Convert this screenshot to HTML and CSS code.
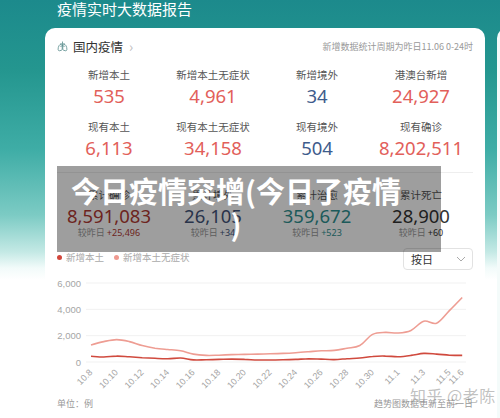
FILE: index.html
```html
<!DOCTYPE html>
<html lang="zh-CN">
<head>
  <meta charset="UTF-8">
  <meta name="viewport" content="width=device-width, initial-scale=1.0">
  <title>今日疫情突增</title>
  <link rel="stylesheet" href="styles.css">
</head>
<body>
  <div class="page">
    <h1 class="page-title">疫情实时大数据报告</h1>

    <div class="cards">
      <section class="card">
        <div class="card-head">
          <div class="card-title">
            <svg class="lung" width="11" height="11" viewBox="0 0 12 12">
              <path d="M6 1v4M6 5c-.6.5-1.4.8-2 .8M6 5c.6.5 1.4.8 2 .8" />
              <path d="M4.3 3.2C2.6 3.6 1.2 6.2 1.2 9c0 1.3.8 1.9 1.9 1.6l1.9-.6c.5-.2.7-.6.7-1.1V5.4c0-1.3-.5-2.4-1.4-2.2z" />
              <path d="M7.7 3.2c1.7.4 3.1 3 3.1 5.8 0 1.3-.8 1.9-1.9 1.6l-1.9-.6c-.5-.2-.7-.6-.7-1.1V5.4c0-1.3.5-2.4 1.4-2.2z" />
            </svg>
            <span>国内疫情</span>
            <span class="arrow">&#8250;</span>
          </div>
          <div class="card-note">新增数据统计周期为昨日11.06 0-24时</div>
        </div>

        <div class="stats">
          <div class="stat"><div class="stat-label">新增本土</div><div class="stat-num red">535</div></div>
          <div class="stat"><div class="stat-label">新增本土无症状</div><div class="stat-num red">4,961</div></div>
          <div class="stat"><div class="stat-label">新增境外</div><div class="stat-num blue">34</div></div>
          <div class="stat"><div class="stat-label">港澳台新增</div><div class="stat-num red">24,927</div></div>
          <div class="stat"><div class="stat-label">现有本土</div><div class="stat-num red">6,113</div></div>
          <div class="stat"><div class="stat-label">现有本土无症状</div><div class="stat-num red">34,158</div></div>
          <div class="stat"><div class="stat-label">现有境外</div><div class="stat-num blue">504</div></div>
          <div class="stat"><div class="stat-label">现有确诊</div><div class="stat-num red">8,202,511</div></div>
        </div>

        <div class="stats totals">
          <div class="stat">
            <div class="stat-label">累计确诊</div>
            <div class="stat-num dark-red">8,591,083</div>
            <div class="stat-diff">较昨日 <b class="dark-red">+25,496</b></div>
          </div>
          <div class="stat">
            <div class="stat-label">累计境外</div>
            <div class="stat-num navy">26,105</div>
            <div class="stat-diff">较昨日 <b class="navy">+34</b></div>
          </div>
          <div class="stat">
            <div class="stat-label">累计治愈</div>
            <div class="stat-num teal">359,672</div>
            <div class="stat-diff">较昨日 <b class="teal">+523</b></div>
          </div>
          <div class="stat">
            <div class="stat-label">累计死亡</div>
            <div class="stat-num ink">28,900</div>
            <div class="stat-diff">较昨日 <b class="ink">+60</b></div>
          </div>
        </div>

        <div class="chart-bar">
          <div class="legend">
            <span class="legend-item"><i class="dot dot-local"></i>新增本土</span>
            <span class="legend-item"><i class="dot dot-asym"></i>新增本土无症状</span>
          </div>
          <div class="select">
            <span>按日</span>
            <svg width="10" height="6" viewBox="0 0 10 6"><path d="M1 1l4 4 4-4" /></svg>
          </div>
        </div>

        <svg class="chart" id="trend" width="416" height="122"></svg>

        <div class="chart-foot">
          <span>单位：例</span>
          <span>趋势图数据更新至前一日</span>
        </div>
      </section>

      <section class="card card-next"></section>
    </div>

    <div class="banner">今日疫情突增(今日了疫情)</div>
    <div class="watermark">知乎 @老陈</div>
  </div>

  <script>
    const dates = [];
    for (let d = 8; d <= 31; d++) dates.push('10.' + d);
    for (let d = 1; d <= 6; d++) dates.push('11.' + d);

    const local = [430, 380, 450, 400, 330, 280, 250, 300, 160, 170, 200, 220, 200, 150, 150,
                   170, 200, 250, 220, 180, 250, 300, 420, 450, 400, 500, 650, 600, 520, 500];
    const asym = [1300, 1550, 1700, 1550, 1250, 1050, 950, 850, 600, 500, 520, 560, 580, 600, 620,
                  650, 700, 780, 850, 880, 1050, 1250, 2100, 2250, 2200, 2400, 3100, 2950, 3900, 4900];

    const chart = document.getElementById('trend');
    const x0 = 34, step = 12.8, yBase = 90, yMax = 11;

    const xAt = i => x0 + i * step;
    const yAt = v => yBase - v * (yBase - yMax) / 6000;

    // catmull-rom through the points, written as cubic beziers
    function smoothPath(values) {
      const pts = values.map((v, i) => [xAt(i), yAt(v)]);
      let d = 'M' + pts[0][0] + ' ' + pts[0][1].toFixed(1);
      for (let i = 0; i < pts.length - 1; i++) {
        const p0 = pts[i - 1] || pts[i];
        const p1 = pts[i];
        const p2 = pts[i + 1];
        const p3 = pts[i + 2] || p2;
        const c1 = [p1[0] + (p2[0] - p0[0]) / 6, p1[1] + (p2[1] - p0[1]) / 6];
        const c2 = [p2[0] - (p3[0] - p1[0]) / 6, p2[1] - (p3[1] - p1[1]) / 6];
        d += ' C' + c1.map(n => n.toFixed(1)).join(' ') + ' ' +
             c2.map(n => n.toFixed(1)).join(' ') + ' ' +
             p2[0].toFixed(1) + ' ' + p2[1].toFixed(1);
      }
      return d;
    }

    let html = '';
    [0, 2000, 4000, 6000].forEach(v => {
      const y = yAt(v);
      html += `<line class="grid" x1="29" x2="409" y1="${y}" y2="${y}"/>`;
      html += `<text class="y-label" x="24" y="${y + 3.5}">${v.toLocaleString('en-US')}</text>`;
    });

    dates.forEach((label, i) => {
      if (i % 2 !== 0 && i !== dates.length - 1) return;
      const x = xAt(i) + 2;
      html += `<text class="x-label" x="${x}" y="101" transform="rotate(-45 ${x} 101)">${label}</text>`;
    });

    html += `<path class="line line-asym" d="${smoothPath(asym)}"/>`;
    html += `<path class="line line-local" d="${smoothPath(local)}"/>`;
    chart.innerHTML = html;
  </script>
</body>
</html>
```

FILE: styles.css
```css
body {
  margin: 0;
  font-family: "Noto Sans CJK SC", "Noto Sans", sans-serif;
  color: #333;
  background: #fff;
  overflow: hidden;
}

.page {
  position: relative;
  height: 418px;
  overflow: hidden;
  background: linear-gradient(180deg, #1c8a8c 0, #24968f 70px, #3fada6 150px, #7ccbc4 215px, #c4e9e5 252px, #f2fbfa 268px, #fff 280px);
}

.page-title {
  margin: 0;
  padding-left: 57px;
  font-size: 15px;
  font-weight: 400;
  line-height: 17px;
  color: #fff;
}

.cards {
  display: flex;
  gap: 12px;
  margin-top: 11px;
  padding-left: 45px;
}

.card {
  flex: 0 0 440px;
  box-sizing: border-box;
  height: 400px;
  padding: 10px 12px 0;
  background: #fff;
  border-radius: 10px;
}

.card-next {
  flex: 0 0 100px;
  background: #f4fbfa;
}

.card-head {
  display: flex;
  justify-content: space-between;
  align-items: center;
  height: 16px;
}

.card-title {
  display: flex;
  align-items: center;
  gap: 5px;
  font-size: 12.5px;
  color: #333;
}

.lung {
  fill: none;
  stroke: #5c8f8f;
  stroke-width: 0.9;
  stroke-linecap: round;
}

.arrow {
  color: #bbb;
  font-size: 14px;
  margin-left: 1px;
}

.card-note {
  font-size: 9px;
  color: #999;
}

.stats {
  display: grid;
  grid-template-columns: repeat(4, 1fr);
  row-gap: 12px;
  margin-top: 14px;
  padding-bottom: 12px;
  border-bottom: 1px solid #eee;
  text-align: center;
}

.stat-label {
  font-size: 10.5px;
  line-height: 14px;
  color: #555;
}

.stat-num {
  margin-top: 2px;
  font-family: "Noto Sans", sans-serif;
  font-size: 18.5px;
  line-height: 24px;
}

.totals {
  margin-top: 15px;
  padding-bottom: 0;
  border-bottom: none;
}

.totals .stat-num {
  margin-top: 3px;
  line-height: 22px;
}

.stat-diff {
  font-size: 9px;
  line-height: 12px;
  color: #999;
}

.stat-diff b {
  font-family: "Noto Sans", sans-serif;
  font-weight: 400;
}

.red { color: #e2605a; }
.blue { color: #3e5c8c; }
.dark-red { color: #b03a33; }
.navy { color: #43557a; }
.teal { color: #2f9191; }
.ink { color: #333; }

.chart-bar {
  display: flex;
  justify-content: space-between;
  align-items: flex-start;
  margin-top: 9px;
  height: 21px;
}

.legend {
  display: flex;
  gap: 10px;
  padding-top: 1px;
  font-size: 9.5px;
  line-height: 16px;
  color: #aaa;
}

.legend-item {
  display: flex;
  align-items: center;
  gap: 4px;
}

.dot {
  width: 5px;
  height: 5px;
  border-radius: 50%;
}

.dot-local { background: #d2463b; }
.dot-asym { background: #f09a90; }

.select {
  display: flex;
  justify-content: space-between;
  align-items: center;
  box-sizing: border-box;
  width: 70px;
  height: 22px;
  padding: 0 6px 0 7px;
  border: 1px solid #e2e2e2;
  border-radius: 4px;
  font-size: 11px;
  color: #333;
}

.select svg {
  fill: none;
  stroke: #aaa;
  stroke-width: 1;
}

.chart {
  display: block;
  margin-top: 3px;
}

.chart .grid {
  stroke: #f1f1f1;
  stroke-width: 1;
}

.chart .y-label,
.chart .x-label {
  font-family: "Liberation Sans", sans-serif;
  font-size: 9.5px;
  fill: #a5a5a5;
  text-anchor: end;
}

.chart .x-label {
  font-size: 9px;
}

.chart .line {
  fill: none;
  stroke-width: 1.6;
  stroke-linejoin: round;
}

.chart .line-local { stroke: #d04a3e; }
.chart .line-asym { stroke: #ee9d93; }

.chart-foot {
  display: flex;
  justify-content: space-between;
  margin-top: 3px;
  font-size: 9px;
  line-height: 14px;
  color: #999;
}

.banner {
  position: absolute;
  left: 57px;
  top: 166px;
  box-sizing: border-box;
  width: 384px;
  height: 86px;
  padding: 8px 38px 0 12px;
  background: rgba(0, 0, 0, 0.38);
  color: #fff;
  font-size: 29px;
  font-weight: 700;
  line-height: 33px;
  text-align: center;
  line-break: anywhere;
}

.watermark {
  position: absolute;
  left: 410px;
  top: 385px;
  font-size: 16px;
  line-height: 20px;
  color: rgba(140, 140, 140, 0.55);
  letter-spacing: 0.5px;
}
```
